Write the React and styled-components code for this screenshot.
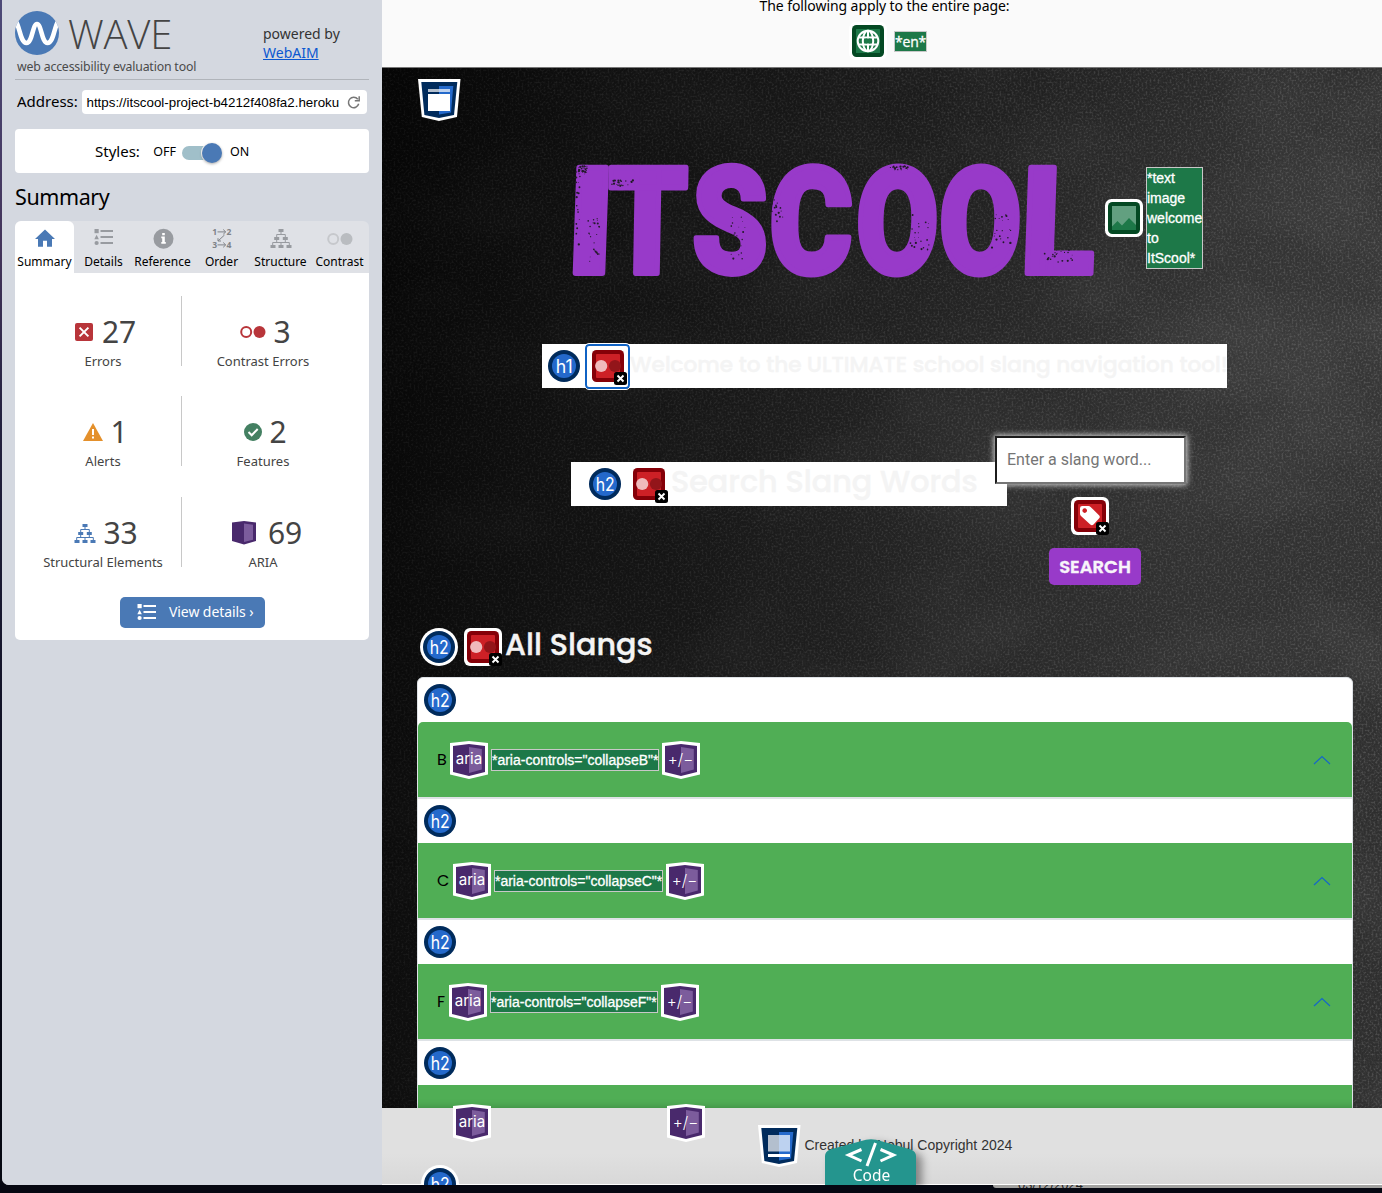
import React from "react";
import styled, { createGlobalStyle, css } from "styled-components";

const GlobalStyle = createGlobalStyle`
  * { box-sizing: border-box; }
  body { margin: 0; background: #060812; overflow: hidden; }
  svg { display: block; flex: none; overflow: visible; }
`;

const ui = `"Noto Sans", "Open Sans", sans-serif`;
const arial = `"Liberation Sans", Arial, sans-serif`;
const display = `Poppins, Inter, sans-serif`;

const Desktop = styled.div`
  width: 1382px;
  height: 1193px;
  padding-left: 2px;
  overflow: hidden;
  background: linear-gradient(#4d4a78 0, #43345a 250px, #23213f 420px, #070a18 900px, #060812);
`;

const Window = styled.div`
  display: flex;
  height: 1185px;
  border-bottom-left-radius: 7px;
  overflow: hidden;
  background: #d4d8e0;
  position: relative;
`;

const DesktopEdge = styled.div`
  height: 8px;
  margin-left: -2px;
  background: #060812;
  display: flex;
  justify-content: flex-end;
`;

const BackWindow = styled.div`
  width: 389px;
  height: 3px;
  overflow: hidden;
  background: #a3a3a1;
  border-bottom-left-radius: 4px;
  padding-left: 25px;
  font: 13px/13px ${arial};
  color: #222;
  span { display: block; margin-top: -7px; }
`;

/* ---------- Sidebar ---------- */

const Sidebar = styled.aside`
  width: 380px;
  flex: none;
  padding: 11px 13px 0;
  background: #d4d8e0;
  font-family: ${ui};
  color: #000;
`;

const Brand = styled.header`
  display: flex;
  height: 69px;
  border-bottom: 1px solid #b0b4ba;
`;

const BrandMain = styled.div`
  width: 248px;
`;

const BrandRow = styled.div`
  display: flex;
  gap: 9px;
  height: 46px;
`;

const BrandName = styled.div`
  font: 300 40px/46px "Open Sans", sans-serif;
  letter-spacing: -0.2px;
  color: #444;
`;

const Tagline = styled.div`
  padding-left: 2px;
  font-size: 12.3px;
  letter-spacing: -0.17px;
  line-height: 20px;
  color: #4a4a4a;
  white-space: nowrap;
`;

const Powered = styled.div`
  padding-top: 13px;
  font-size: 14px;
  line-height: 19px;
  color: #333;
  white-space: nowrap;
  a { display: block; color: #0b57d0; text-decoration: underline; }
`;

const AddressRow = styled.div`
  display: flex;
  align-items: center;
  height: 24px;
  margin: 10px 2px 15px;
  font-size: 15px;
  justify-content: space-between;
  > span { margin-top: -2px; }
`;

const AddressField = styled.div`
  display: flex;
  align-items: center;
  justify-content: space-between;
  width: 285px;
  height: 24px;
  padding: 1px 7px 0 4.5px;
  border-radius: 4px;
  background: #fff;
  font: 13.33px ${arial};
  white-space: nowrap;
`;

const StylesCard = styled.div`
  display: flex;
  align-items: center;
  height: 44px;
  padding-left: 80px;
  border-radius: 4px;
  background: #fff;
  font-size: 15px;
`;

const SwitchLabel = styled.small`
  font-size: 12.5px;
`;

const Switch = styled.div`
  width: 40px;
  height: 14px;
  margin: 3px 8px 0 6px;
  border-radius: 7px;
  background: #a0bfc9;
  display: flex;
  align-items: center;
  justify-content: flex-end;
  &::after {
    content: "";
    width: 20px;
    height: 20px;
    border-radius: 50%;
    background: #4a79b5;
    box-shadow: 0 1px 3px rgba(0, 0, 0, 0.35), 0 0 0 1px #fff;
  }
`;

const Heading = styled.h2`
  margin: 8px 0 9px;
  font-size: 21.5px;
  letter-spacing: -0.4px;
  line-height: 31px;
  font-weight: 400;
`;

const Tabs = styled.nav`
  display: grid;
  grid-template-columns: repeat(6, 59px);
  height: 52px;
  border-radius: 6px 6px 0 0;
  background: #dfe1e6;
`;

const Tab = styled.div`
  display: flex;
  flex-direction: column;
  align-items: center;
  padding-top: 5px;
  font-size: 12px;
  line-height: 17px;
  border-radius: 6px 6px 0 0;
  background: ${(p) => (p.$active ? "#fff" : "transparent")};
  svg { margin-bottom: 3px; }
`;

const Panel = styled.section`
  height: 367px;
  padding-top: 23px;
  border-radius: 0 0 5px 5px;
  background: #fff;
`;

const Stats = styled.div`
  display: grid;
  grid-template-columns: 167px 187px;
  row-gap: 30.4px;
`;

const Stat = styled.div`
  height: 70px;
  padding-top: 16px;
  color: #444;
  text-align: center;
  ${(p) =>
    p.$left
      ? css`border-right: 1px solid #c8c8c8; padding-left: 10px;`
      : css`padding-right: 25px;`}
`;

const StatValue = styled.div`
  display: flex;
  align-items: center;
  justify-content: center;
  gap: ${(p) => p.$gap || 8}px;
  height: 40px;
  font-size: 30px;
  letter-spacing: -0.2px;
  line-height: 40px;
  padding-left: ${(p) => p.$shift || 0}px;
`;

const StatLabel = styled.div`
  font-size: 13px;
  line-height: 18px;
  white-space: nowrap;
`;

const DetailsButton = styled.button`
  display: flex;
  align-items: center;
  gap: 12px;
  width: 145px;
  height: 31px;
  margin: 30px 0 0 105px;
  padding: 0 0 0 17px;
  border: 0;
  border-radius: 5px;
  background: #4a79b5;
  color: #fff;
  font: 14px ${ui};
  letter-spacing: -0.08px;
  white-space: nowrap;
  svg { margin-top: 2px; }
  span { margin-top: -2px; }
`;

/* ---------- Page ---------- */

const Page = styled.main`
  width: 1000px;
  display: flex;
  flex-direction: column;
  position: relative;
  overflow: hidden;
`;

const PageNotice = styled.div`
  height: 68px;
  flex: none;
  display: flex;
  flex-direction: column;
  align-items: center;
  border-bottom: 1px solid #777;
  background: #fafafa;
  font: 14px/20px ${ui};
  color: #000;
  > p { margin: -4px 0 6px 5px; letter-spacing: -0.08px; }
`;

const NoticeIcons = styled.div`
  display: flex;
  align-items: center;
  gap: 7px;
  margin: 0 0 0 12px;
`;

const Note = styled.span`
  display: block;
  border: 1px solid #c8c8c8;
  background: #1d7848;
  color: #fff;
  font: ${(p) => p.$font || `14px/20px ${arial}`};
  -webkit-text-stroke: 0.3px #fff;
  letter-spacing: ${(p) => p.$track || 0}px;
  width: ${(p) => (p.$width ? p.$width + "px" : "auto")};
  white-space: ${(p) => (p.$wrap ? "normal" : "nowrap")};
`;

const Board = styled.div`
  position: relative;
  height: 1040px;
  flex: none;
  overflow: hidden;
  background:
    radial-gradient(ellipse 500px 420px at 76% 38%, rgba(255,255,255,0.05), transparent),
    radial-gradient(ellipse 400px 300px at 100% 15%, rgba(255,255,255,0.04), transparent),
    linear-gradient(100deg, #050505 0%, #0f0f0f 18%, #1b1b1b 45%, #292929 75%, #2f2f2f 100%);
`;

const Texture = styled.svg`
  position: absolute;
  inset: 0;
`;

const BoardContent = styled.div`
  position: relative;
  padding: 10px 29px 0 35px;
`;

const Hero = styled.div`
  display: flex;
  align-items: center;
  height: 116px;
  margin: 39px 0 68px 155px;
  gap: 3px;
`;

const WhiteBar = styled.div`
  display: flex;
  align-items: center;
  height: 44px;
  background: #fff;
  white-space: nowrap;
`;

const WelcomeBar = styled(WhiteBar)`
  width: 685px;
  margin-left: 125px;
  padding-left: 3px;
`;

const WelcomeText = styled.div`
  margin-top: -3px;
`;

const SearchBar = styled(WhiteBar)`
  width: 436px;
  margin-top: 26px;
  padding-left: 15px;
  gap: 6px;
`;

const Focused = styled.div`
  flex: none;
  margin-left: 2px;
  border: 2px solid #0f62c4;
  border-radius: 4px;
  outline: 1px solid #fff;
  height: 45px;
  width: 45px;
  display: grid;
  place-items: center;
`;

const Title = styled.span`
  font-family: ${display};
  font-weight: 500;
  -webkit-text-stroke: 0.4px #f4f4f4;
  font-size: ${(p) => p.$size}px;
  line-height: 40px;
  color: #f4f4f4;
  white-space: nowrap;
`;

const SearchRow = styled.div`
  display: flex;
  align-items: flex-start;
  height: 149px;
  margin: 48px 0 0 154px;
`;

const SearchForm = styled.div`
  display: flex;
  flex-direction: column;
  align-items: center;
  width: 191px;
  margin-left: -12px;
  z-index: 1;
`;

const SlangInput = styled.div`
  width: 191px;
  height: 48px;
  padding: 0 10px;
  border: 2px solid;
  border-color: #1c1c1c #767676 #767676 #1c1c1c;
  background: #fff;
  box-shadow: 0 0 6px 1px rgba(255, 255, 255, 0.8);
  color: #757575;
  font: 16px/43px Roboto, sans-serif;
  white-space: nowrap;
`;

const LabelIcon = styled.div`
  margin: 13px 0 13px -1px;
`;

const SearchButton = styled.button`
  width: 92px;
  height: 37px;
  margin-left: 9px;
  padding: 0;
  border: 0;
  border-radius: 5px;
  background: #983ac9;
  color: #f8f4fa;
  font: 600 18px ${display};
  -webkit-text-stroke: 0.4px #f8f4fa;
`;

const SlangHeading = styled.div`
  display: flex;
  align-items: center;
  gap: 6px;
  height: 38px;
  margin: 43px 0 11px 3px;
`;

const HeadingText = styled.div`
  margin: -5px 0 0 -3px;
`;

const Accordion = styled.div`
  width: 936px;
  border: 1px solid #dee2e6;
  border-radius: 6px;
  background: #fff;
  overflow: hidden;
`;

const HeaderStrip = styled.div`
  height: 44px;
  padding: 3px;
`;

const AccordionRow = styled.div`
  display: flex;
  align-items: center;
  height: 75px;
  padding: 0 21px 0 19px;
  border-radius: ${(p) => (p.$first ? "5px 5px 0 0" : "0")};
  background: #50ae55;
  font: 16px ${display};
  color: #000;
`;

const Divider = styled.div`
  height: 2px;
  background: #dee2e6;
`;

const Letter = styled.span`
  width: ${(p) => p.$w}px;
`;

const RowNote = styled.div`
  margin: 0 3px;
`;

const Spacer = styled.div`
  flex: 1;
`;

const Footer = styled.footer`
  position: relative;
  display: flex;
  align-items: center;
  gap: 4.5px;
  height: 77px;
  flex: none;
  padding: 0 0 2px 376px;
  border-bottom: 1px solid #fff;
  background: linear-gradient(#e0e0e0 60%, #d8d8d8);
  box-shadow: 0 0 8px rgba(0, 0, 0, 0.25);
  font: 14px ${arial};
  color: #333;
  white-space: nowrap;
`;

const Pin = styled.div`
  position: absolute;
  left: ${(p) => p.$x}px;
  top: ${(p) => p.$y}px;
`;

const CodeTab = styled.div`
  position: absolute;
  left: 443px;
  top: 31px;
  width: 91px;
  height: 45px;
  filter: drop-shadow(6px 4px 4px rgba(0, 0, 0, 0.4));
`;

/* ---------- Icons ---------- */

const Level = ({ n }) => (
  <svg width="38" height="38" viewBox="-19 -19 38 38">
    <circle r="19" fill="#fff" />
    <circle r="16" fill="#002b5c" />
    <circle r="12" fill="#2469cb" />
    <text x="0.2" y="6.6" textAnchor="middle" fontFamily="Inter, sans-serif" fontWeight="400" fontSize="18" textLength={n === 1 ? 17 : 19} lengthAdjust="spacingAndGlyphs" fill="#fff">{"h" + n}</text>
  </svg>
);

const Remove = () => (
  <g>
    <rect x="25" y="25" width="13" height="13" rx="2.5" fill="#000" />
    <path d="M28.500 28.500l6 6M34.500 28.500l-6 6" stroke="#fff" strokeWidth="1.9" />
  </g>
);

const RedIcon = ({ children }) => (
  <svg width="38" height="38" viewBox="0 0 38 38">
    <rect width="38" height="38" rx="6" fill="#fff" />
    <rect x="3" y="3" width="32" height="32" rx="4.5" fill="#850008" />
    <rect x="7" y="7" width="24" height="24" rx="1" fill="#cd2026" />
    {children}
    <Remove />
  </svg>
);

const ContrastError = () => (
  <RedIcon>
    <circle cx="12.2" cy="19" r="6.1" fill="#f0babc" />
    <circle cx="26" cy="19" r="6.1" fill="#93151a" />
  </RedIcon>
);

const LabelError = () => (
  <RedIcon>
    <path fillRule="evenodd" d="M9 11.2Q9 9 11.2 9h6.2q1.3 0 2.2.9l8.4 8.4q1.6 1.6 0 3.2l-5.5 5.9q-1.6 1.6-3.2 0L10 19q-1-.9-1-2.200z M13.700 11.300a2.300 2.300 0 1 0 .01 0z" fill="#fff" />
  </RedIcon>
);

const GreenIcon = ({ children }) => (
  <svg width="38" height="38" viewBox="0 0 38 38">
    <rect width="38" height="38" rx="6.500" fill="#fff" />
    <rect x="3" y="3" width="32" height="32" rx="4.500" fill="#044923" />
    <rect x="7" y="7" width="24" height="24" rx="0.500" fill="#1d7848" />
    {children}
  </svg>
);

const LanguageIcon = () => (
  <GreenIcon>
    <g fill="none" stroke="#fff" strokeWidth="2">
      <circle cx="19" cy="19" r="10.300" />
      <ellipse cx="19" cy="19" rx="5.200" ry="10.300" />
      <path d="M19 9v20M9.500 15.500h19M9.500 22.500h19" />
    </g>
    <path d="M16.500 16.500h5v5h-5z" fill="#1d7848" />
  </GreenIcon>
);

const AltIcon = () => (
  <GreenIcon>
    <rect x="7" y="7" width="24" height="24" fill="#62a080" />
    <path d="M7 31V27.500L12.500 22l4.500 4.500 7-7.500 7 7v5z" fill="#1d7848" />
  </GreenIcon>
);

const Shield = ({ children }) => (
  <svg width="42" height="43" viewBox="0 0 42 43">
    <path d="M0 1h42.500L39 39 21 43 3.800 39z" fill="#fff" />
    <path d="M3.300 4h36L36 37 21 40 6.400 37z" fill="#002b5c" />
    <path d="M21 8h14.300l-2.300 26.500L21 36.500z" fill="#2469cb" />
    {children}
  </svg>
);

const HeaderShield = () => (
  <Shield>
    <path d="M10 11h22v3H10z" fill="#fff" fillOpacity="0.700" />
    <path d="M10 16h22v17H10z" fill="#fff" />
  </Shield>
);

const FooterShield = () => (
  <Shield>
    <path d="M10 11h22v16.500H10z" fill="#fff" fillOpacity="0.700" />
    <path d="M10 30h22v3H10z" fill="#fff" />
  </Shield>
);

const HeaderIcon = styled.div`
  padding-left: 1px;
`;

const AriaIcon = ({ label = "aria" }) => (
  <svg width="38" height="38" viewBox="0 0 38 38">
    <path d="M0 2L19 0l19 2v31.500L19 38 0 33.500z" fill="#fff" />
    <path d="M3 5l16-2 16 2v26L19 35 3 31z" fill="#49296c" />
    <path d="M19 6l12.800 2v20.500L19 32z" fill="#7c5c9c" />
    {label === "aria" ? (
      <text x="19" y="22.500" textAnchor="middle" fontFamily="Inter, sans-serif" fontSize="15" textLength="26.500" lengthAdjust="spacingAndGlyphs" fill="#fff">aria</text>
    ) : (
      <text x="18.500" y="24" textAnchor="middle" fontFamily="Inter, sans-serif" fontWeight="300" fontSize="16" textLength="25.500" lengthAdjust="spacingAndGlyphs" fill="#fff">{label}</text>
    )}
  </svg>
);

const WaveLogo = () => (
  <svg width="44" height="44" viewBox="0 0 44 44">
    <defs><clipPath id="disc"><circle cx="22" cy="22" r="22" /></clipPath></defs>
    <circle cx="22" cy="22" r="22" fill="#4a79b5" />
    <path clipPath="url(#disc)" d="M1 10.500C5 17 5.500 32 11.500 32S17.500 13 22 13s4.500 19 10.500 19S39 17 43 10.500" fill="none" stroke="#fff" strokeWidth="4.600" />
  </svg>
);

const Reload = () => (
  <svg width="13" height="13" viewBox="0 0 13 13" fill="none" stroke="#777" strokeWidth="1.500">
    <path d="M11.700 7.800A5.200 5.200 0 1 1 10.800 3.300M12.200 0.300v4.500H7.800" />
  </svg>
);

const Home = () => (
  <svg width="24" height="24" viewBox="0 0 24 24">
    <path d="M12 3.500L2 13h3v7.700h5v-6h4v6h5V13h3z" fill="#4a79b5" />
  </svg>
);

const ListIcon = ({ color }) => (
  <svg width="20" height={color === "#fff" ? 20 : 24} viewBox="0 2 20 20" fill={color}>
    <rect x="0.500" y="3" width="4.200" height="4.200" />
    <path d="M2.600 8.700l2.300 4.500H.3z" />
    <circle cx="2.600" cy="17" r="2.100" />
    <path d="M6.500 4h12.500v2H6.500zM6.500 10h12.500v2H6.500zM6.500 16h12.500v2H6.500z" />
  </svg>
);

const InfoIcon = () => (
  <svg width="24" height="24" viewBox="0 0 24 24">
    <circle cx="12.500" cy="12.800" r="10" fill="#989ba0" />
    <path d="M11.200 7h2.600v2.300h-2.600zM10.300 10.500h3.500v5.500h1v1.700h-4.500V16h.9v-3.800h-.9z" fill="#fff" />
  </svg>
);

const OrderIcon = () => (
  <svg width="24" height="24" viewBox="0 0 24 24" fill="#808387">
    <g fontFamily="Noto Sans, sans-serif" fontWeight="700" fontSize="8.500">
      <text x="2.300" y="9">1</text><text x="16.500" y="9">2</text>
      <text x="2.300" y="22">3</text><text x="16.500" y="22">4</text>
    </g>
    <path d="M7.500 5.900h8M13.200 3.500l2.500 2.400-2.500 2.400M7.500 18.900h8M13.200 16.500l2.500 2.400-2.500 2.400M14.500 9L8 15M8 12.200V15h3" fill="none" stroke="#808387" />
  </svg>
);

const TreeIcon = ({ color, size = 24 }) => (
  <svg width={size} height={size} viewBox={size === 22 ? "1 1 22 22" : "0 0 24 24"}>
    <g fill={color}>
      <path d="M9.500 3h5v3h-5zM5.200 11h5v3h-5zM13.800 11h5v3h-5zM1.500 19h5v3h-5zM9.500 19h5v3h-5zM17.500 19h5v3h-5z" />
    </g>
    <path d="M12 6v2.500M7.700 11V8.500h8.600V11M7.700 14v2.500M16.300 14v2.500M3.700 19v-2.500h16.600V19M12 16.500V19" fill="none" stroke={color} />
  </svg>
);

const Circles = ({ color, light, w = 26, h = 12 }) => (
  <svg width={w} height={h} viewBox="0 0 26 12">
    <circle cx="6.200" cy="6" r="5" fill="none" stroke={light || color} strokeWidth="2" />
    <circle cx="19.500" cy="6" r="6" fill={color} />
  </svg>
);

const CircleTab = styled.div`
  padding: 7px 0 5px;
`;

const ErrorIcon = () => (
  <svg width="18" height="18" viewBox="0 0 18 18">
    <rect width="18" height="18" rx="2" fill="#b8353a" />
    <path d="M4.600 4.600l8.800 8.800M13.400 4.600l-8.800 8.800" stroke="#fff" strokeWidth="2" />
  </svg>
);

const AlertIcon = () => (
  <svg width="20" height="18" viewBox="0 0 20 18">
    <path d="M10 0l10 18H0z" fill="#e4902b" />
    <path d="M9 6h2v6H9zM9 13.500h2v2H9z" fill="#fff" />
  </svg>
);

const FeatureIcon = () => (
  <svg width="18" height="18" viewBox="0 0 18 18">
    <circle cx="9" cy="9" r="9" fill="#448062" />
    <path d="M4.500 9l3.200 3.200 6-6.200" fill="none" stroke="#fff" strokeWidth="2" />
  </svg>
);

const AriaSmall = () => (
  <svg width="24" height="24" viewBox="0 0 24 24">
    <path d="M0 1.500L12 0l12 1.500V20L12 23.500 0 20z" fill="#49296c" />
    <path d="M12 2.500l9 1.200v15L12 21z" fill="#7c5c9c" />
  </svg>
);

const Chevron = () => (
  <svg width="18" height="10" viewBox="0 0 18 10">
    <path d="M1 9l8-7.500L17 9" fill="none" stroke="#1567c8" strokeWidth="1.200" />
  </svg>
);

const specks = Array.from({ length: 230 }, (_, i) => {
  const r = (k) => {
    const v = Math.sin((i + 1) * k) * 43758.5453;
    return v - Math.floor(v);
  };
  const zones = [
    [13, 58, 12, 46], [1, 10, 4, 75], [156, 55, 14, 45], [194, 34, 14, 28], [3, 6, 10, 8],
    [334, 54, 20, 36], [417, 54, 20, 36], [468, 90, 30, 14], [36, 20, 22, 6], [315, 6, 18, 4],
  ];
  const [x, y, w, h] = zones[i % zones.length];
  return { x: x + r(12.9898) * w, y: y + r(78.233) * h, s: 0.4 + r(39.425) * 0.75 };
});

/* character, left edge, width, glyph ink width, left bearing, slant */
const letters = [
  ["I", -3.5, 26, 25, 8, -2],
  ["T", 31.5, 72, 84.500, 2, -1],
  ["S", 118.500, 66, 81, 4, 0],
  ["C", 196, 76, 89, 5, -1],
  ["O", 282.5, 69, 86, 5, -1],
  ["O", 365.5, 69, 86, 5, -1],
  ["L", 450, 63, 69, 8, -2],
];

const Wordmark = () => (
  <svg width="530" height="116" viewBox="-3 0 530 116">
    {letters.map(([c, x, w, ink, bearing, slant], i) => (
      <g key={i} transform={`translate(${x} 113) skewX(${slant}) scale(${w / ink} 1) translate(${2.500 - bearing} 0)`}>
        <text fontFamily="Roboto, sans-serif" fontWeight="900" fontSize="148" fill="#983ac9" stroke="#983ac9" strokeWidth="6" strokeLinejoin="round">{c}</text>
      </g>
    ))}
    {specks.map((s, i) => <circle key={i} cx={s.x} cy={s.y} r={s.s} fill="#221a28" />)}
  </svg>
);

const rows = [
  { letter: "B", w: 13 },
  { letter: "C", w: 16 },
  { letter: "F", w: 12 },
];

export default function App() {
  return (
    <Desktop>
      <GlobalStyle />
      <Window>
        <Sidebar>
          <Brand>
            <BrandMain>
              <BrandRow><WaveLogo /><BrandName>WAVE</BrandName></BrandRow>
              <Tagline>web accessibility evaluation tool</Tagline>
            </BrandMain>
            <Powered>powered by<a>WebAIM</a></Powered>
          </Brand>
          <AddressRow>
            <span>Address:</span>
            <AddressField>https://itscool-project-b4212f408fa2.heroku<Reload /></AddressField>
          </AddressRow>
          <StylesCard>
            <span>Styles:</span>
            <SwitchLabel style={{ marginLeft: 13.5 }}>OFF</SwitchLabel>
            <Switch />
            <SwitchLabel>ON</SwitchLabel>
          </StylesCard>
          <Heading>Summary</Heading>
          <Tabs>
            <Tab $active><Home />Summary</Tab>
            <Tab><ListIcon color="#989ba0" />Details</Tab>
            <Tab><InfoIcon />Reference</Tab>
            <Tab><OrderIcon />Order</Tab>
            <Tab><TreeIcon color="#989ba0" />Structure</Tab>
            <Tab><CircleTab><Circles color="#b9bcc0" light="#c6c8cc" /></CircleTab>Contrast</Tab>
          </Tabs>
          <Panel>
            <Stats>
              <Stat $left><StatValue $shift={5} $gap={9}><ErrorIcon />27</StatValue><StatLabel>Errors</StatLabel></Stat>
              <Stat><StatValue $shift={4}><Circles color="#b8353a" w={26} h={12} />3</StatValue><StatLabel>Contrast Errors</StatLabel></Stat>
              <Stat $left><StatValue $shift={4}><AlertIcon />1</StatValue><StatLabel>Alerts</StatLabel></Stat>
              <Stat><StatValue $shift={4}><FeatureIcon />2</StatValue><StatLabel>Features</StatLabel></Stat>
              <Stat $left><StatValue $shift={5} $gap={8}><TreeIcon color="#4a79b5" size={22} />33</StatValue><StatLabel>Structural Elements</StatLabel></Stat>
              <Stat><StatValue $shift={8} $gap={12}><AriaSmall />69</StatValue><StatLabel>ARIA</StatLabel></Stat>
            </Stats>
            <DetailsButton><ListIcon color="#fff" /><span>View details ›</span></DetailsButton>
          </Panel>
        </Sidebar>
        <Page>
          <PageNotice>
            <p>The following apply to the entire page:</p>
            <NoticeIcons><LanguageIcon /><Note $track={-0.2} $font={`14px/19px "Open Sans", sans-serif`}>*en*</Note></NoticeIcons>
          </PageNotice>
          <Board>
            <Texture width="1000" height="1040">
              <filter id="grain" x="0" y="0" width="100%" height="100%">
                <feTurbulence type="fractalNoise" baseFrequency="0.5" numOctaves="3" seed="4" />
                <feColorMatrix values="0 0 0 0 1  0 0 0 0 1  0 0 0 0 1  0.450 0 0 0 -0.200" />
              </filter>
              <filter id="smudge" x="0" y="0" width="100%" height="100%">
                <feTurbulence type="fractalNoise" baseFrequency="0.006 0.009" numOctaves="4" seed="9" />
                <feColorMatrix values="0 0 0 0 1  0 0 0 0 1  0 0 0 0 1  0.120 0 0 0 -0.050" />
              </filter>
              <linearGradient id="fade"><stop offset="0" stopColor="#555" /><stop offset="1" stopColor="#fff" /></linearGradient>
              <mask id="fadeMask"><rect width="1000" height="1040" fill="url(#fade)" /></mask>
              <g mask="url(#fadeMask)">
                <rect width="1000" height="1040" filter="url(#grain)" />
                <rect width="1000" height="1040" filter="url(#smudge)" />
              </g>
            </Texture>
            <BoardContent>
              <HeaderIcon><HeaderShield /></HeaderIcon>
              <Hero>
                <Wordmark />
                <AltIcon />
                <Note $wrap $width={57}>*text image welcome to ItScool*</Note>
              </Hero>
              <WelcomeBar>
                <Level n={1} />
                <Focused><ContrastError /></Focused>
                <WelcomeText><Title $size={21.6}>Welcome to the ULTIMATE school slang navigation tool!</Title></WelcomeText>
              </WelcomeBar>
              <SearchRow>
                <SearchBar>
                  <Level n={2} />
                  <ContrastError />
                  <HeadingText><Title $size={30.2}>Search Slang Words</Title></HeadingText>
                </SearchBar>
                <SearchForm>
                  <SlangInput>Enter a slang word...</SlangInput>
                  <LabelIcon><LabelError /></LabelIcon>
                  <SearchButton>SEARCH</SearchButton>
                </SearchForm>
              </SearchRow>
              <SlangHeading>
                <Level n={2} />
                <ContrastError />
                <HeadingText><Title $size={30.2}>All Slangs</Title></HeadingText>
              </SlangHeading>
              <Accordion>
                {rows.map((r, i) => (
                  <React.Fragment key={r.letter}>
                    <HeaderStrip><Level n={2} /></HeaderStrip>
                    <AccordionRow $first={i === 0}>
                      <Letter $w={r.w}>{r.letter}</Letter>
                      <AriaIcon />
                      <RowNote><Note $track={-0.01}>{`*aria-controls="collapse${r.letter}"*`}</Note></RowNote>
                      <AriaIcon label="+/−" />
                      <Spacer />
                      <Chevron />
                    </AccordionRow>
                    <Divider />
                  </React.Fragment>
                ))}
                <HeaderStrip><Level n={2} /></HeaderStrip>
                <AccordionRow />
              </Accordion>
            </BoardContent>
          </Board>
          <Footer>
            <FooterShield />
            <span>Created by Nobul Copyright 2024</span>
            <Pin $x={71} $y={-4}><AriaIcon /></Pin>
            <Pin $x={285} $y={-4}><AriaIcon label="+/−" /></Pin>
            <Pin $x={39} $y={57}><Level n={2} /></Pin>
            <CodeTab>
              <svg width="91" height="46" viewBox="0 0 91 46">
                <path d="M0 46V17Q0 12.500 5 10.500L41 0.800Q46 -0.500 51 0.800L86 10.500Q91 12.500 91 17V46z" fill="#24958e" />
                <path d="M36.500 10.500L23.500 16l13 6M55.500 10.500L68.500 16l-13 6M50.500 4l-8.500 23" fill="none" stroke="#fff" strokeWidth="3" />
                <text x="46.500" y="42" textAnchor="middle" fontFamily="Noto Sans, sans-serif" fontSize="15.500" fill="#fff">Code</text>
              </svg>
            </CodeTab>
          </Footer>
        </Page>
      </Window>
      <DesktopEdge><BackWindow><span>03/12/2024</span></BackWindow></DesktopEdge>
    </Desktop>
  );
}
